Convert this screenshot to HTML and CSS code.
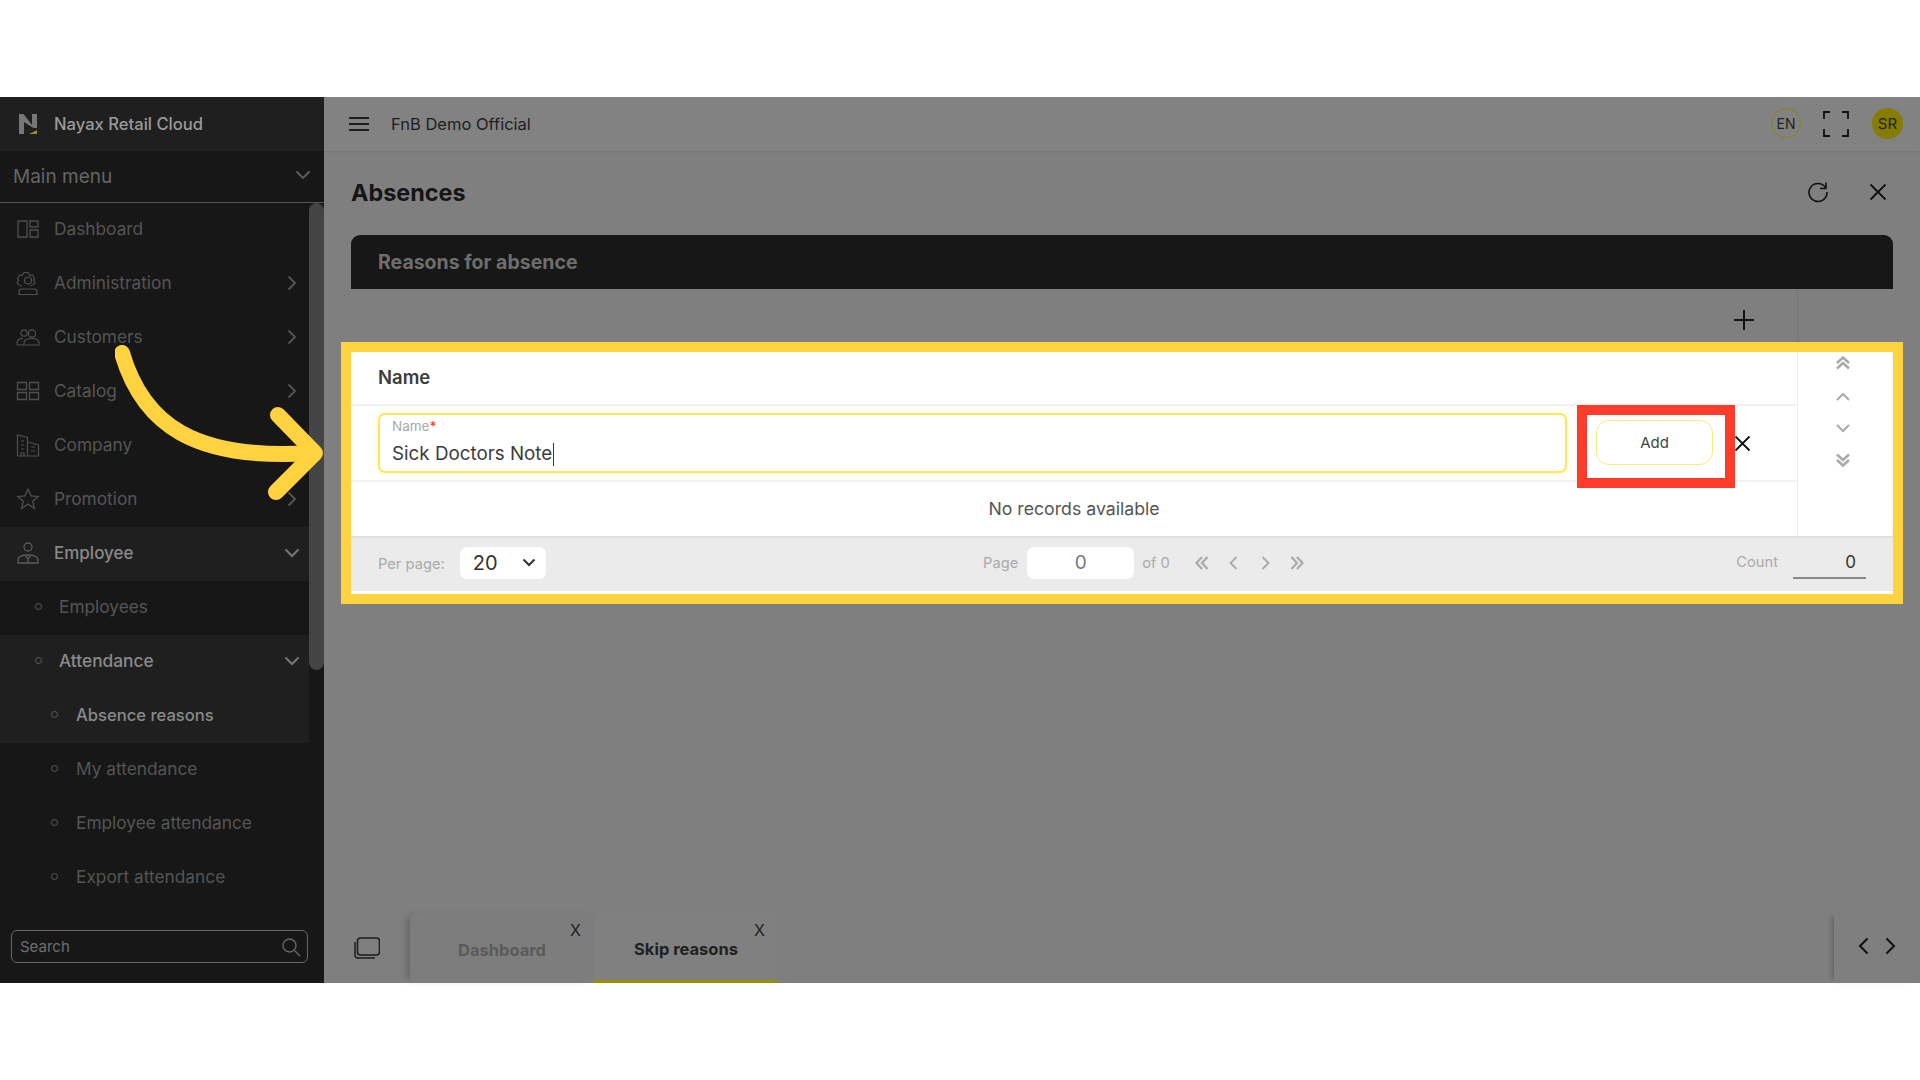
FILE: index.html
```html
<!DOCTYPE html>
<html lang="en">
<head>
<meta charset="utf-8">
<title>Absences</title>
<link rel="stylesheet" href="styles.css">
</head>
<body>
<div class="stage">
  <div class="app">
    <aside class="sidebar">
      <div class="brand">
        <svg class="logo" width="22" height="22" viewBox="0 0 22 22"><path d="M2 1h4.500l8.500 11V1h5v14h-3.500L7 9v12H2z" fill="#777"/><path d="M12 21l8-4v4z" fill="#9a8a20"/></svg>
        <span>Nayax Retail Cloud</span>
      </div>
      <div class="mainmenu">
        <span>Main menu</span>
        <svg class="chev" width="16" height="10" viewBox="0 0 16 10"><path d="M1.500 1.500 8 8l6.500-6.500" fill="none" stroke="#5f5f5f" stroke-width="1.800"/></svg>
      </div>
      <div class="navwrap">
        <nav class="nav">
          <a class="item"><svg class="ic" width="24" height="24" viewBox="0 0 24 24"><path d="M2 4h9v16H2zM14 4h8v6h-8zM14 13h8v7h-8z" fill="none" stroke="#4f4f4f" stroke-width="1.300"/></svg><span class="lbl">Dashboard</span></a>
          <a class="item"><svg class="ic" width="24" height="24" viewBox="0 0 24 24"><path d="M6 15c-2.500-.5-4-1.500-5-3l1.500-2.500-1-2.500 2-3 2.500.5 2-3h4l2 3 2.500-.500 2 3-1 2.500 1.500 2.500c-1 1.500-2.500 2.500-5 3M3 23.500v-3c0-1.500 1-2.500 3-2.500h12c2 0 3 1 3 2.500v3z" fill="none" stroke="#4f4f4f" stroke-width="1.200"/><circle cx="12" cy="9.500" r="3.500" fill="none" stroke="#4f4f4f" stroke-width="1.200"/></svg><span class="lbl">Administration</span><svg class="arr" width="10" height="16" viewBox="0 0 10 16"><path d="M1.500 1.500 8 8l-6.500 6.500" fill="none" stroke="#555" stroke-width="1.800"/></svg></a>
          <a class="item"><svg class="ic" width="24" height="24" viewBox="0 0 24 24"><circle cx="8" cy="8" r="3.200" fill="none" stroke="#4f4f4f" stroke-width="1.200"/><circle cx="16" cy="8.500" r="3.600" fill="none" stroke="#4f4f4f" stroke-width="1.200"/><path d="M1 20v-2c0-3 3-5 6-4.500M8 20v-2c0-2.500 3-4.500 8-4.500s7 2 7 4.500v2zM1 20h7" fill="none" stroke="#4f4f4f" stroke-width="1.200"/></svg><span class="lbl">Customers</span><svg class="arr" width="10" height="16" viewBox="0 0 10 16"><path d="M1.500 1.500 8 8l-6.500 6.500" fill="none" stroke="#555" stroke-width="1.800"/></svg></a>
          <a class="item"><svg class="ic" width="24" height="24" viewBox="0 0 24 24"><path d="M1.500 3.500h9v7h-9zM13.500 3.500h9v7h-9zM1.500 13.500h9v7h-9zM13.500 13.500h9v7h-9z" fill="none" stroke="#4f4f4f" stroke-width="1.300"/></svg><span class="lbl">Catalog</span><svg class="arr" width="10" height="16" viewBox="0 0 10 16"><path d="M1.500 1.500 8 8l-6.500 6.500" fill="none" stroke="#555" stroke-width="1.800"/></svg></a>
          <a class="item"><svg class="ic" width="24" height="24" viewBox="0 0 24 24"><path d="M1.500 23V2l10 2.500V23M11.500 9l11 3v11H1.500M5 8h3M5 12h3M5 16h3M15 14h4M15 18h4M5 23v-3h3v3" fill="none" stroke="#4f4f4f" stroke-width="1.200"/></svg><span class="lbl">Company</span></a>
          <a class="item"><svg class="ic" width="24" height="24" viewBox="0 0 24 24"><path d="m12 2 3 6.800 7.200.7-5.400 4.800 1.600 7.200L12 17l-6.400 4.500 1.600-7.200L1.800 9.500 9 8.800z" fill="none" stroke="#4f4f4f" stroke-width="1.300"/></svg><span class="lbl">Promotion</span><svg class="arr" width="10" height="16" viewBox="0 0 10 16"><path d="M1.500 1.500 8 8l-6.500 6.500" fill="none" stroke="#555" stroke-width="1.800"/></svg></a>
          <a class="item open main-open"><svg class="ic" width="24" height="24" viewBox="0 0 24 24"><circle cx="12" cy="6" r="4" fill="none" stroke="#5c5c5c" stroke-width="1.300"/><path d="M2 22v-3c0-3 4-5 10-5s10 2 10 5v3zM9 14l3 4 3-4M12 18v4" fill="none" stroke="#5c5c5c" stroke-width="1.300"/></svg><span class="lbl">Employee</span><svg class="down" width="16" height="10" viewBox="0 0 16 10"><path d="M1.500 1.500 8 8l6.500-6.500" fill="none" stroke="#777" stroke-width="2"/></svg></a>
          <a class="item sub"><i class="dot"></i><span class="lbl">Employees</span></a>
          <a class="item sub open"><i class="dot"></i><span class="lbl">Attendance</span><svg class="down" width="16" height="10" viewBox="0 0 16 10"><path d="M1.500 1.500 8 8l6.500-6.500" fill="none" stroke="#777" stroke-width="2"/></svg></a>
          <a class="item subsub open"><i class="dot"></i><span class="lbl">Absence reasons</span></a>
          <a class="item subsub"><i class="dot"></i><span class="lbl">My attendance</span></a>
          <a class="item subsub"><i class="dot"></i><span class="lbl">Employee attendance</span></a>
          <a class="item subsub"><i class="dot"></i><span class="lbl">Export attendance</span></a>
        </nav>
        <div class="scroll"></div>
      </div>
      <div class="searchwrap">
        <div class="search">
          <span>Search</span>
          <svg width="20" height="20" viewBox="0 0 20 20"><circle cx="8.500" cy="8.500" r="6.500" fill="none" stroke="#666" stroke-width="1.400"/><path d="m13.500 13.500 5.500 5.500" stroke="#666" stroke-width="1.400"/></svg>
        </div>
      </div>
    </aside>

    <div class="main">
      <header class="topbar">
        <svg class="burger" width="20" height="14" viewBox="0 0 20 14"><path d="M0 1h20M0 7h20M0 13h20" stroke="#1c1c1c" stroke-width="1.800"/></svg>
        <span class="org">FnB Demo Official</span>
        <div class="topright">
          <span class="lang">EN</span>
          <svg width="26" height="26" viewBox="0 0 26 26"><path d="M7 1H1v7M19 1h6v7M7 25H1v-7M19 25h6v-7" fill="none" stroke="#111" stroke-width="1.800"/></svg>
          <span class="avatar">SR</span>
        </div>
      </header>

      <section class="content">
        <div class="titlebar">
          <h1>Absences</h1>
          <div class="titleicons">
            <svg width="22" height="22" viewBox="0 0 22 22"><path d="M18.500 6.500A9 9 0 1 0 20 11" fill="none" stroke="#111" stroke-width="1.600"/><path d="M19 1.500v6h-6" fill="none" stroke="#111" stroke-width="1.600"/></svg>
            <svg width="18" height="18" viewBox="0 0 18 18"><path d="m1.500 1.500 15 15M16.500 1.500l-15 15" stroke="#111" stroke-width="1.800"/></svg>
          </div>
        </div>

        <div class="card">
          <div class="cardhead">Reasons for absence</div>
          <div class="toolbar">
            <div class="toolmain">
              <svg width="20" height="20" viewBox="0 0 20 20"><path d="M10 0v20M0 10h20" stroke="#111" stroke-width="2"/></svg>
            </div>
            <div class="toolside"></div>
          </div>

          <div class="spot">
            <div class="grid">
              <div class="cols">
                <div class="colhead">Name</div>
                <div class="editrow">
                  <div class="field">
                    <div class="flabel">Name<b>*</b></div>
                    <div class="fvalue">Sick Doctors Note<i class="caret"></i></div>
                  </div>
                  <div class="addbox"><button class="add">Add</button></div>
                  <svg class="cancel" width="17" height="17" viewBox="0 0 17 17"><path d="m1.500 1.500 14 14M15.500 1.500l-14 14" stroke="#111" stroke-width="1.800"/></svg>
                </div>
                <div class="empty">No records available</div>
              </div>
              <div class="side">
                <svg width="16" height="14" viewBox="0 0 16 14"><path d="m2 7 6-5.500L14 7M2 12.500 8 7l6 5.500" fill="none" stroke="#aaa" stroke-width="2.600"/></svg>
                <svg width="16" height="10" viewBox="0 0 16 10"><path d="m2 8 6-6 6 6" fill="none" stroke="#aaa" stroke-width="2"/></svg>
                <svg width="16" height="10" viewBox="0 0 16 10"><path d="m2 2 6 6 6-6" fill="none" stroke="#aaa" stroke-width="2"/></svg>
                <svg width="16" height="14" viewBox="0 0 16 14"><path d="M2 1.500 8 7l6-5.500M2 7l6 5.500L14 7" fill="none" stroke="#aaa" stroke-width="2.600"/></svg>
              </div>
            </div>
            <div class="pager">
              <div class="pleft">
                <span class="muted">Per page:</span>
                <div class="select"><span>20</span><svg width="14" height="9" viewBox="0 0 14 9"><path d="m1.500 1.500 5.500 5.500 5.500-5.500" fill="none" stroke="#333" stroke-width="2"/></svg></div>
              </div>
              <div class="pmid">
                <span class="muted">Page</span>
                <div class="pageinput">0</div>
                <span class="muted">of 0</span>
                <div class="pnav">
                  <svg width="14" height="14" viewBox="0 0 14 14"><path d="M7 1 1.500 7 7 13M12.500 1 7 7l5.500 6" fill="none" stroke="#aaa" stroke-width="2.200"/></svg>
                  <svg width="9" height="14" viewBox="0 0 9 14"><path d="M7.500 1 1.500 7l6 6" fill="none" stroke="#aaa" stroke-width="1.800"/></svg>
                  <svg width="9" height="14" viewBox="0 0 9 14"><path d="m1.500 1 6 6-6 6" fill="none" stroke="#aaa" stroke-width="1.800"/></svg>
                  <svg width="14" height="14" viewBox="0 0 14 14"><path d="m1.500 1 5.500 6-5.500 6M7 1l5.500 6L7 13" fill="none" stroke="#aaa" stroke-width="2.200"/></svg>
                </div>
              </div>
              <div class="pright">
                <span class="muted">Count</span>
                <div class="count">0</div>
              </div>
            </div>
          </div>
        </div>
      </section>

      <footer class="tabbar">
        <svg class="stack" width="26" height="22" viewBox="0 0 26 22"><path d="M1 5v13c0 2 1 3 3 3h17" fill="none" stroke="#1c1c1c" stroke-width="1.500"/><rect x="3.500" y="1" width="22" height="17" rx="3" fill="none" stroke="#1c1c1c" stroke-width="1.600"/></svg>
        <div class="tab"><span>Dashboard</span><em>X</em></div>
        <div class="tab active"><span>Skip reasons</span><em>X</em></div>
        <div class="tabnav">
          <svg width="11" height="18" viewBox="0 0 11 18"><path d="M9.500 1.500 2 9l7.500 7.500" fill="none" stroke="#111" stroke-width="2"/></svg>
          <svg width="11" height="18" viewBox="0 0 11 18"><path d="M1.500 1.500 9 9l-7.500 7.500" fill="none" stroke="#111" stroke-width="2"/></svg>
        </div>
      </footer>
    </div>
  </div>

  <svg class="arrow" width="230" height="170" viewBox="0 0 230 170">
    <path d="M7 8C28 80 80 116 198 108" fill="none" stroke="#ffd23f" stroke-width="16" stroke-linecap="round"/>
    <path d="M163 70 200 108 161 147" fill="none" stroke="#ffd23f" stroke-width="16" stroke-linecap="round" stroke-linejoin="round"/>
  </svg>
</div>
</body>
</html>
```
FILE: styles.css
```css
* { box-sizing: border-box; }
html, body { margin: 0; padding: 0; background: #fff; }
body { font-family: Inter, "Noto Sans", sans-serif; }
.stage { position: relative; width: 1920px; height: 1080px; padding-top: 97px; overflow: hidden; }
.app { display: flex; height: 886px; background: #7f7f7f; }

.sidebar { width: 324px; flex: none; display: flex; flex-direction: column; background: #171717; }
.brand { height: 54px; background: #1f1f1f; display: flex; align-items: center; padding-left: 17px; gap: 15px; font-size: 16.600px; font-weight: 500; color: #9a9a9a; }
.logo { flex: none; }
.mainmenu { height: 52px; display: flex; align-items: center; justify-content: space-between; padding: 0 12px 0 13px; font-size: 19px; color: #666; border-bottom: 1px solid #555; }
.chev { margin-right: 1px; margin-top: -4px; }
.navwrap { flex: none; height: 721px; position: relative; overflow: hidden; }
.nav { display: flex; flex-direction: column; width: 309px; }
.item { height: 54px; flex: none; display: flex; align-items: center; padding: 0 11px 3px 16px; font-size: 17.300px; color: #555; }
.ic { flex: none; margin-right: 14px; }
.lbl { flex: 1; }
.item.open { background: #1f1f1f; color: #8a8a8a; font-weight: 500; }
.item.main-open { font-size: 17px; }
.sub { padding-left: 35px; }
.subsub { padding-left: 51px; }
.subsub.open { font-size: 16.600px; }
.dot { width: 7px; height: 7px; border: 1.500px solid #5a5a5a; border-radius: 50%; flex: none; margin-right: 17px; }
.subsub .dot { margin-right: 18px; }
.arr { flex: none; margin-right: 1px; }
.down { flex: none; margin-right: -2px; }
.scroll { position: absolute; top: 0; right: 0; width: 15px; height: 467px; border-radius: 8px; background: #444; }
.searchwrap { padding: 6px 16px 0 11px; }
.search { height: 33px; border: 1px solid #666; border-radius: 6px; display: flex; align-items: center; justify-content: space-between; padding: 0 6px 0 8px; font-size: 15px; color: #6f6f6f; }

.main { flex: 1; min-width: 0; display: flex; flex-direction: column; }
.topbar { height: 54px; flex: none; display: flex; align-items: center; padding: 0 17px 0 25px; background: #828282; box-shadow: 0 1px 2px rgba(0,0,0,.08); }
.burger { margin-right: 22px; }
.org { font-size: 16.500px; color: #1e1e1e; }
.topright { margin-left: auto; display: flex; align-items: center; gap: 23px; }
.lang, .avatar { width: 30px; height: 30px; border-radius: 50%; display: flex; align-items: center; justify-content: center; font-size: 14px; color: #222; margin-top: -2px; }
.lang { border: 1px solid #8d8410; margin-right: -1px; }
.avatar { background: #867d00; width: 31px; height: 31px; font-size: 15px; }

.content { flex: 1; min-height: 0; padding: 0 27px 0 27px; }
.titlebar { height: 84px; display: flex; align-items: center; justify-content: space-between; padding-bottom: 2px; }
h1 { margin: 0; font-size: 23.400px; font-weight: 700; color: #151515; }
.titleicons { display: flex; align-items: center; gap: 40px; padding-right: 7px; margin-right: -1px; }

.card { width: 1542px; }
.cardhead { height: 54px; background: #171717; border-radius: 9px 9px 0 0; display: flex; align-items: center; padding-left: 27px; font-size: 19.500px; font-weight: 700; color: #6e6e6e; }
.toolbar { height: 53px; display: flex; }
.toolmain { flex: 1; display: flex; align-items: center; justify-content: flex-end; padding: 9px 43px 0 0; }
.toolside { width: 96px; border-left: 1px solid #767676; }

.spot { margin: 0 -10px; border: 10px solid #ffd23f; background: #fff; position: relative; }
.grid { display: flex; }
.cols { flex: 1; min-width: 0; }
.side { width: 96px; flex: none; border-left: 1px solid #eee; display: flex; flex-direction: column; align-items: center; padding-top: 4px; padding-right: 6px; height: 184px; gap: 0; }
.side svg:nth-child(2) { margin-top: 22px; }
.side svg:nth-child(3) { margin-top: 21px; }
.side svg:nth-child(4) { margin-top: 20px; }
.colhead { height: 54px; display: flex; align-items: center; padding: 0 0 2px 27px; font-size: 18.500px; font-weight: 600; color: #3c3c3c; border-bottom: 2px solid #f2f2f2; }
.editrow { height: 76px; display: flex; align-items: center; padding-left: 27px; border-bottom: 2px solid #f2f2f2; position: relative; }
.field { width: 1189px; height: 60px; border: 2px solid #fbe75e; border-radius: 7px; box-shadow: 0 0 6px rgba(251,231,94,.35); padding: 4px 12px; flex: none; }
.flabel { font-size: 13.500px; color: #aaa; line-height: 15px; }
.flabel b { color: #f33; font-weight: 500; }
.fvalue { font-size: 18.800px; color: #3c3c3c; line-height: 28px; margin-top: 6px; display: flex; align-items: center; }
.caret { display: inline-block; width: 1px; height: 23px; background: #333; margin-left: 1px; }
.addbox { width: 158px; height: 83px; border: 10px solid #ff3b2b; margin: 0 0 -7px 10px; display: flex; align-items: center; justify-content: center; flex: none; padding-bottom: 8px; padding-right: 3px; }
.add { width: 117px; height: 45px; background: #fff; border: 1.500px solid #f9ea7a; border-radius: 13px; font: 400 15px Inter, sans-serif; color: #444; padding: 0; }
.cancel { margin-left: -1px; flex: none; }
.empty { height: 54px; display: flex; align-items: center; justify-content: center; padding-bottom: 2px; font-size: 17.700px; color: #555; }

.pager { height: 58px; display: flex; align-items: flex-start; background: linear-gradient(#ebebeb 53px, #fff 53px); border-top: 2px solid #e0e0e0; position: relative; }
.pleft { display: flex; align-items: center; height: 54px; padding: 0 0 5px 27px; gap: 15px; }
.pleft .muted { margin-top: 2px; }
.muted { font-size: 14.700px; color: #aaa; }
.select { width: 86px; height: 32px; border-radius: 7px; background: #fff; display: flex; align-items: center; justify-content: space-between; padding: 0 10px 0 13px; font-size: 20px; color: #333; }
.pmid { position: absolute; left: 632px; top: 0; height: 54px; display: flex; align-items: center; padding-bottom: 5px; }
.pageinput { width: 107px; height: 32px; margin: 0 8px 0 9px; background: #fff; border-radius: 7px; display: flex; align-items: center; justify-content: center; font-size: 19px; color: #777; }
.pnav { display: flex; align-items: center; margin-left: 25px; }
.pnav svg:nth-child(2) { margin-left: 20px; }
.pnav svg:nth-child(3) { margin-left: 23px; }
.pnav svg:nth-child(4) { margin-left: 20px; }
.pright { margin-left: auto; display: flex; align-items: center; height: 54px; padding: 0 27px 3px 0; gap: 15px; }
.pright .muted { margin-top: -3px; margin-left: -1px; }
.count { width: 73px; height: 31px; border-bottom: 2px solid #888; text-align: right; padding-right: 10px; font-size: 17px; line-height: 28px; color: #333; }

.tabbar { height: 70px; flex: none; display: flex; align-items: flex-end; padding-left: 30px; position: relative; }
.stack { margin: 0 30px 24px 0; flex: none; }
.tab { width: 184px; height: 70px; position: relative; display: flex; align-items: center; justify-content: center; padding-top: 3px; font-size: 16.500px; font-weight: 700; color: #5a5a5a; background: #7d7d7d; border-radius: 8px 8px 0 0; }
.tab:first-of-type { box-shadow: -6px 0 8px -4px rgba(0,0,0,.25); }
.tab em { position: absolute; right: 13px; top: 7px; font-style: normal; font-size: 16px; font-weight: 400; color: #222; }
.tab.active { background: #808080; color: #1f1f1f; border-bottom: 3px solid #9a9000; padding-top: 5px; }
.tabnav { position: absolute; right: 0; top: 0; bottom: 0; width: 86px; display: flex; align-items: center; justify-content: center; gap: 16px; padding: 0 0 4px 0; box-shadow: -5px 0 6px -4px rgba(0,0,0,.3); }

.arrow { position: absolute; left: 115px; top: 345px; }
```
